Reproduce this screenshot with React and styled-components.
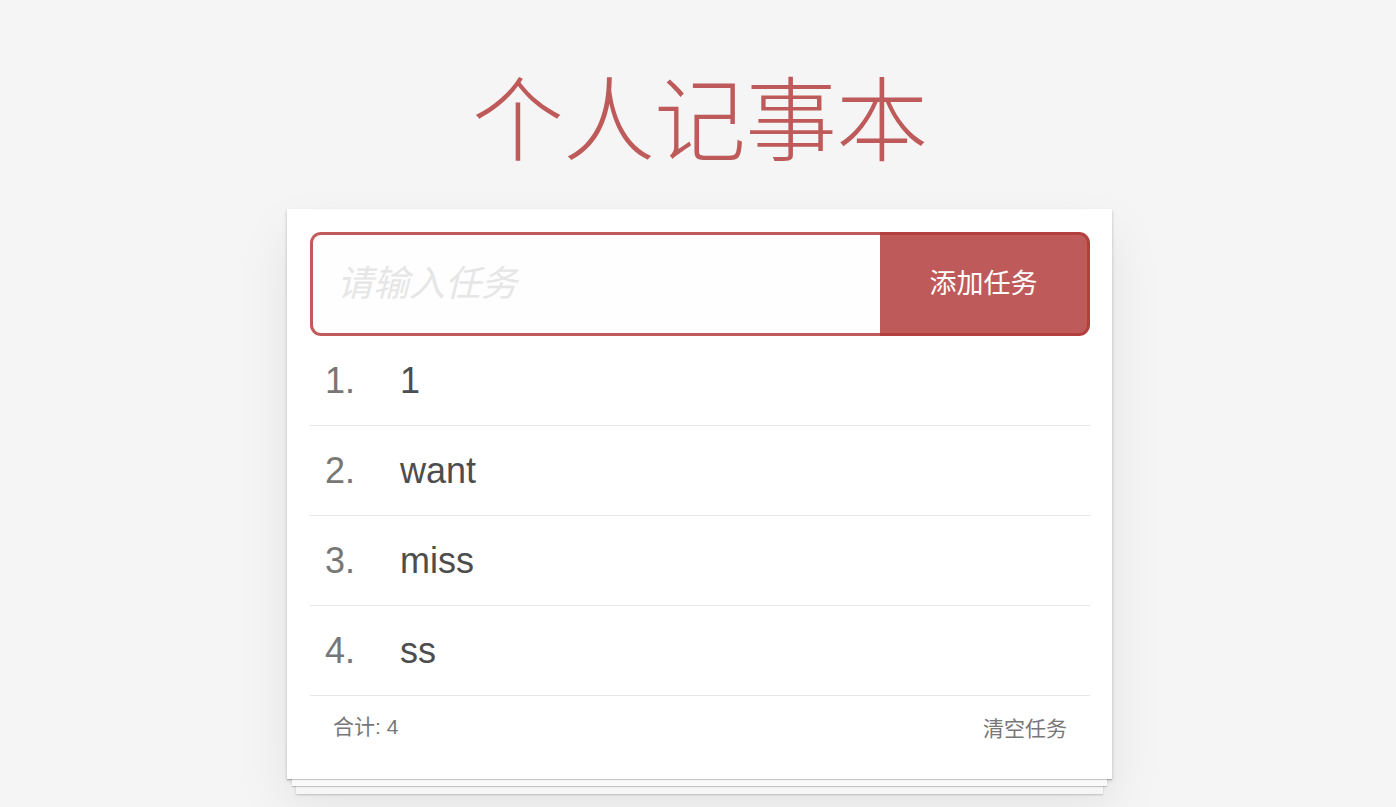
import React from "react";
import styled, { createGlobalStyle } from "styled-components";

const Global = createGlobalStyle`
  html, body { margin: 0; padding: 0; background: #f5f5f5; }
  body {
    font-family: "Liberation Sans", Arial, "Noto Sans CJK SC", sans-serif;
    color: #4d4d4d;
  }
  * { box-sizing: border-box; }
`;

const Page = styled.div`
  display: flex;
  flex-direction: column;
  align-items: center;
  padding: 54px 0 0 3px;
  min-height: 807px;
`;

const Title = styled.h1`
  margin: 0 0 35px;
  font-family: "Noto Sans CJK SC", sans-serif;
  font-weight: 300;
  font-size: 92px;
  line-height: 120px;
  color: #bf5a5a;
  letter-spacing: -1px;
`;

const Card = styled.section`
  width: 825px;
  background: #fff;
  padding: 23px 22px 0 23px;
  box-shadow:
    0 1px 1px rgba(0, 0, 0, 0.2),
    0 12px 0 -5px #fafafa,
    0 13px 1px -5px rgba(0, 0, 0, 0.2),
    0 24px 0 -9px #f6f6f6,
    0 25px 2px -9px rgba(0, 0, 0, 0.2),
    0 2px 4px rgba(0, 0, 0, 0.15),
    0 25px 50px rgba(0, 0, 0, 0.08);
`;

const Form = styled.form`
  display: flex;
  height: 104px;
  margin: 0;
`;

const Input = styled.input`
  flex: 1;
  min-width: 0;
  height: 100%;
  border: 3px solid #c25b5b;
  border-right: none;
  border-radius: 11px 0 0 11px;
  background: #fefefe;
  padding: 0 0 0 24px;
  font-family: "Liberation Sans", "Noto Sans CJK SC", sans-serif;
  font-size: 36px;
  color: #4d4d4d;
  outline: none;
  &::placeholder {
    color: #e6e6e6;
    font-style: italic;
  }
`;

const AddButton = styled.button`
  width: 210px;
  height: 100%;
  border: 3px solid #b43f3f;
  border-left: none;
  border-radius: 0 11px 11px 0;
  background: #bf5a5a;
  color: #fff;
  font-family: "Noto Sans CJK SC", sans-serif;
  font-size: 27px;
  padding: 0 0 5px 0;
  cursor: pointer;
`;

const List = styled.ol`
  list-style: none;
  margin: 0;
  padding: 0;
`;

const Row = styled.li`
  display: flex;
  align-items: center;
  height: 90px;
  border-bottom: 1px solid #e6e6e6;
  font-size: 36px;
`;

const Num = styled.span`
  width: 90px;
  padding-left: 15px;
  color: #777;
`;

const Text = styled.span`
  color: #4d4d4d;
`;

const Footer = styled.footer`
  display: flex;
  justify-content: space-between;
  height: 83px;
  padding: 17px 23px 0;
  font-size: 21px;
  line-height: 28px;
  color: #777;
`;

const Clear = styled.span`
  font-family: "Noto Sans CJK SC", sans-serif;
  color: #777;
  cursor: pointer;
`;

const todos = ["1", "want", "miss", "ss"];

export default function App() {
  return (
    <>
      <Global />
      <Page>
        <Title>个人记事本</Title>
        <Card>
          <Form onSubmit={(e) => e.preventDefault()}>
            <Input placeholder="请输入任务" />
            <AddButton type="submit">添加任务</AddButton>
          </Form>
          <List>
            {todos.map((t, i) => (
              <Row key={i}>
                <Num>{i + 1}.</Num>
                <Text>{t}</Text>
              </Row>
            ))}
          </List>
          <Footer>
            <span>合计: {todos.length}</span>
            <Clear>清空任务</Clear>
          </Footer>
        </Card>
      </Page>
    </>
  );
}
